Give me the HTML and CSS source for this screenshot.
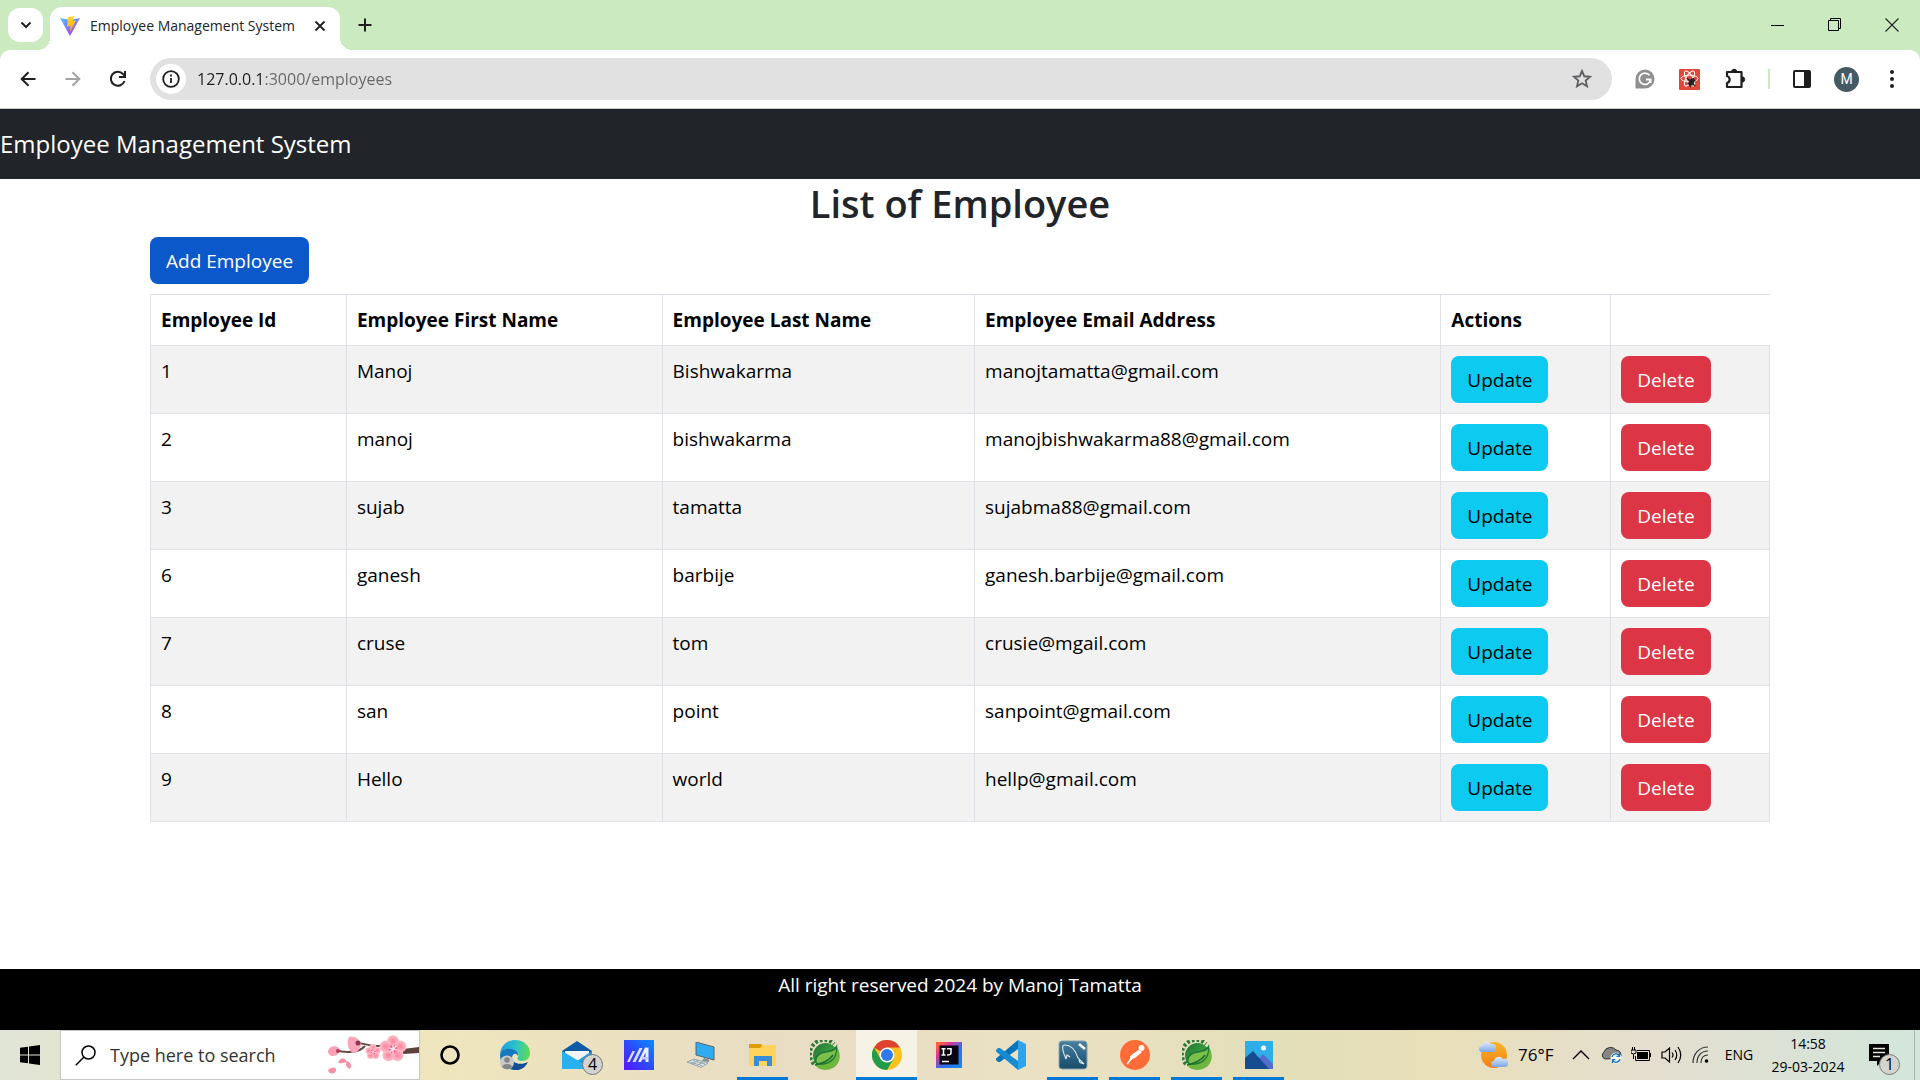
FILE: index.html
```html
<!DOCTYPE html>
<html lang="en">
<head>
<meta charset="utf-8">
<title>Employee Management System</title>
<link rel="stylesheet" href="styles.css">
</head>
<body>
<svg class="defs" aria-hidden="true">
  <defs>
    <linearGradient id="leaf" x1="0" y1="0" x2="1" y2="1"><stop offset="0" stop-color="#1f7434"/><stop offset="0.500" stop-color="#3a9a40"/><stop offset="1" stop-color="#80c344"/></linearGradient>
    <symbol id="spring" viewBox="0 0 30 30">
      <path d="M4 24A14 14 0 0 1 24 4" fill="none" stroke="#2f7a3a" stroke-width="4" stroke-dasharray="2.800 2"/>
      <circle cx="15.500" cy="15.500" r="12.500" fill="url(#leaf)"/>
      <path d="M27 7C32 15 30 24 23 28C16 31.500 8 30 5 25C12 25 24 23 27 7Z" fill="#6fb63f"/>
      <path d="M27 4C24 13 12 9 7 15C3 19 4 24 8 24.500C19 26 29 20 27 4Z" fill="#1f7a35"/>
      <path d="M26 9C21 14 13 11 8.500 16C6 19 6 22 8 23.500C19 24 26 18 26 9Z" fill="#7cc04b"/>
      <path d="M5 25C13 23 19 21 23 15" fill="none" stroke="#1c6b2e" stroke-width="1.500"/>
    </symbol>
  </defs>
</svg>

<header class="browser">
  <div class="tabstrip">
    <button class="tab-search" aria-label="Search tabs"><svg width="12" height="8" viewBox="0 0 12 8"><path d="M1.500 1.500L6 6L10.500 1.500" fill="none" stroke="#1f1f1f" stroke-width="2"/></svg></button>
    <div class="tab">
      <svg width="20" height="20" viewBox="0 0 20 20">
        <defs>
          <linearGradient id="vite" x1="0" y1="0" x2="0.600" y2="1"><stop offset="0" stop-color="#41c8ff"/><stop offset="1" stop-color="#b43bfd"/></linearGradient>
          <linearGradient id="bolt" x1="0" y1="0" x2="0" y2="1"><stop offset="0" stop-color="#ffdc3c"/><stop offset="1" stop-color="#ffa000"/></linearGradient>
        </defs>
        <path d="M0 2L10 4L20 2L10 20Z" fill="url(#vite)"/>
        <path d="M8 1L14 0L13 5L16 4.600L10 16L10.500 10L7 10.500Z" fill="url(#bolt)"/>
      </svg>
      <span class="tab-title">Employee Management System</span>
      <button class="tab-close" aria-label="Close tab"><svg width="12" height="12" viewBox="0 0 12 12"><path d="M1.500 1.500L10.500 10.500M10.500 1.500L1.500 10.500" stroke="#1f1f1f" stroke-width="1.800"/></svg></button>
    </div>
    <button class="new-tab" aria-label="New tab"><svg width="14" height="14" viewBox="0 0 14 14"><path d="M7 0.500V13.500M0.500 7H13.500" stroke="#1f1f1f" stroke-width="2"/></svg></button>
    <div class="window-controls">
      <button aria-label="Minimize"><svg width="14" height="14" viewBox="0 0 14 14"><path d="M0 7.500H13" stroke="#000"/></svg></button>
      <button aria-label="Restore"><svg width="14" height="14" viewBox="0 0 14 14"><path d="M0.500 2.500H10.500V12.500H0.500ZM2.500 2.500V0.500H12.500V10.500H10.500" fill="none" stroke="#000"/></svg></button>
      <button aria-label="Close"><svg width="14" height="14" viewBox="0 0 14 14"><path d="M0.500 0.500L13.500 13.500M13.500 0.500L0.500 13.500" stroke="#222" stroke-width="1.100"/></svg></button>
    </div>
  </div>
  <div class="toolbar">
    <button aria-label="Back"><svg width="16" height="16" viewBox="0 0 16 16"><path d="M15.500 8H2M8.500 1.200L1.700 8L8.500 14.800" fill="none" stroke="#1f1f1f" stroke-width="2"/></svg></button>
    <button aria-label="Forward"><svg width="16" height="16" viewBox="0 0 16 16"><path d="M0.500 8H14M7.500 1.200L14.300 8L7.500 14.800" fill="none" stroke="#a3a3a3" stroke-width="2"/></svg></button>
    <button aria-label="Reload"><svg width="18" height="18" viewBox="0 0 18 18"><path d="M15.500 11A7 7 0 1 1 14 4L16 6" fill="none" stroke="#1f1f1f" stroke-width="2"/><path d="M16 1V7H10" fill="none" stroke="#1f1f1f" stroke-width="2"/></svg></button>
    <div class="omnibox">
      <button class="site-info" aria-label="View site information"><svg width="18" height="18" viewBox="0 0 18 18"><circle cx="9" cy="9" r="7.800" fill="none" stroke="#1f1f1f" stroke-width="1.800"/><path d="M9 8V13M9 4.600V6.400" stroke="#1f1f1f" stroke-width="1.800"/></svg></button>
      <input class="url" type="text" aria-label="Address" value="127.0.0.1:3000/employees">
      <button class="bookmark" aria-label="Bookmark this tab"><svg width="20" height="20" viewBox="0 0 20 20"><path d="M10 2L12.300 7.300L18 7.800L13.700 11.600L15 17.300L10 14.300L5 17.300L6.300 11.600L2 7.800L7.700 7.300Z" fill="none" stroke="#5f6164" stroke-width="1.900"/></svg></button>
    </div>
    <div class="extensions">
      <button aria-label="Grammarly"><svg width="20" height="20" viewBox="0 0 20 20"><path d="M10 0.500A9.500 9.500 0 1 1 10 19.500H0.500V10A9.500 9.500 0 0 1 10 0.500Z" fill="#8f8f8f"/><path d="M14.500 6.300A5.700 5.700 0 1 0 15.600 10.500H11M15.600 10.500V14" fill="none" stroke="#fff" stroke-width="1.800"/></svg></button>
      <button aria-label="React Developer Tools"><svg width="21" height="21" viewBox="0 0 21 21"><rect width="21" height="21" rx="1" fill="#e0483a"/><g fill="none" stroke="#fff" stroke-width="1"><ellipse cx="10.500" cy="9.500" rx="8.500" ry="3.300"/><ellipse cx="10.500" cy="9.500" rx="8.500" ry="3.300" transform="rotate(60 10.500 9.500)"/><ellipse cx="10.500" cy="9.500" rx="8.500" ry="3.300" transform="rotate(120 10.500 9.500)"/></g><ellipse cx="12.500" cy="13" rx="2.500" ry="4" fill="#222" transform="rotate(35 12.500 13)"/><path d="M8 9L16 17M9 15L16.500 11M11 18L15 9" stroke="#222" stroke-width="1.200"/></svg></button>
      <button aria-label="Extensions"><svg width="22" height="22" viewBox="0 0 22 22"><path d="M3 4H17.500V19H3V15C6.500 14 6.500 9 3 8Z" fill="none" stroke="#1f1f1f" stroke-width="2.200" stroke-linejoin="round"/><path d="M7.500 4A2.700 2.700 0 0 1 12.900 4ZM18 8.800A2.700 2.700 0 0 1 18 14.200Z" fill="#1f1f1f" stroke="#1f1f1f"/></svg></button>
    </div>
    <span class="divider"></span>
    <div class="extensions">
      <button aria-label="Side panel"><svg width="18" height="18" viewBox="0 0 18 18"><rect x="1" y="1" width="16" height="16" rx="1" fill="none" stroke="#1f1f1f" stroke-width="2"/><path d="M11 1H17V17H11Z" fill="#1f1f1f"/></svg></button>
      <button aria-label="Profile"><span class="avatar">M</span></button>
      <button aria-label="Menu"><svg width="4" height="18" viewBox="0 0 4 18"><g fill="#1f1f1f"><circle cx="2" cy="2" r="2"/><circle cx="2" cy="9" r="2"/><circle cx="2" cy="16" r="2"/></g></svg></button>
    </div>
  </div>
</header>

<nav class="navbar"><a class="navbar-brand" href="#">Employee Management System</a></nav>

<main class="container">
  <h2>List of Employee</h2>
  <button class="btn btn-primary">Add Employee</button>
  <table class="table">
    <colgroup><col class="col-id"><col class="col-first"><col class="col-last"><col class="col-email"><col class="col-update"><col></colgroup>
    <thead>
      <tr><th>Employee Id</th><th>Employee First Name</th><th>Employee Last Name</th><th>Employee Email Address</th><th>Actions</th><td class="blank"></td></tr>
    </thead>
    <tbody>
      <tr><td>1</td><td>Manoj</td><td>Bishwakarma</td><td>manojtamatta@gmail.com</td><td><button class="btn btn-info">Update</button></td><td><button class="btn btn-danger">Delete</button></td></tr>
      <tr><td>2</td><td>manoj</td><td>bishwakarma</td><td>manojbishwakarma88@gmail.com</td><td><button class="btn btn-info">Update</button></td><td><button class="btn btn-danger">Delete</button></td></tr>
      <tr><td>3</td><td>sujab</td><td>tamatta</td><td>sujabma88@gmail.com</td><td><button class="btn btn-info">Update</button></td><td><button class="btn btn-danger">Delete</button></td></tr>
      <tr><td>6</td><td>ganesh</td><td>barbije</td><td>ganesh.barbije@gmail.com</td><td><button class="btn btn-info">Update</button></td><td><button class="btn btn-danger">Delete</button></td></tr>
      <tr><td>7</td><td>cruse</td><td>tom</td><td>crusie@mgail.com</td><td><button class="btn btn-info">Update</button></td><td><button class="btn btn-danger">Delete</button></td></tr>
      <tr><td>8</td><td>san</td><td>point</td><td>sanpoint@gmail.com</td><td><button class="btn btn-info">Update</button></td><td><button class="btn btn-danger">Delete</button></td></tr>
      <tr><td>9</td><td>Hello</td><td>world</td><td>hellp@gmail.com</td><td><button class="btn btn-info">Update</button></td><td><button class="btn btn-danger">Delete</button></td></tr>
    </tbody>
  </table>
</main>

<footer class="footer">All right reserved 2024 by Manoj Tamatta</footer>

<div class="taskbar">
  <button class="start" aria-label="Start"><svg width="20" height="20" viewBox="0 0 20 20"><path d="M0 2.800L8 1.700V9.500H0ZM9 1.500L20 0V9.500H9ZM0 10.500H8V18.300L0 17.200ZM9 10.500H20V20L9 18.500Z" fill="#000"/></svg></button>
  <div class="search">
    <svg width="21" height="21" viewBox="0 0 21 21"><circle cx="13.500" cy="7.500" r="6.500" fill="none" stroke="#000" stroke-width="1.500"/><path d="M9 12L0.800 20.200" stroke="#000" stroke-width="1.500"/></svg>
    <input type="text" aria-label="Search" placeholder="Type here to search">
    <svg width="92" height="40" viewBox="0 0 92 40">
      <defs>
        <radialGradient id="petal"><stop offset="0" stop-color="#f7839f"/><stop offset="1" stop-color="#ffbfca"/></radialGradient>
        <g id="blossom"><g fill="url(#petal)"><circle cx="0" cy="-7" r="5.500"/><circle cx="6.700" cy="-2.200" r="5.500"/><circle cx="4.100" cy="5.700" r="5.500"/><circle cx="-4.100" cy="5.700" r="5.500"/><circle cx="-6.700" cy="-2.200" r="5.500"/></g><circle r="4" fill="#f4698c"/><path d="M0 -4V4M-4 -1L4 1M-3 3L3 -3" stroke="#ffe3f2" stroke-width="1.200"/></g>
      </defs>
      <path d="M92 16C76 18 66 10 52 11C42 12 36 7 28 8M38 11C32 18 18 18 8 15" fill="none" stroke="#6a4a42" stroke-width="2"/>
      <path d="M92 12V18L76 19V14Z" fill="#5d413b"/>
      <path d="M1 16C2 11 8 10 12 13C13 18 10 21 6 21C3 21 1 19 1 16Z" fill="#f9a0b5"/><circle cx="11" cy="16" r="2" fill="#b53657"/>
      <path d="M22 2C27 0 32 4 34 8C34 14 30 18 26 18C21 15 19 7 22 2Z" fill="#fba6bb"/><circle cx="31" cy="8" r="2.500" fill="#8f3450"/>
      <use href="#blossom" transform="translate(46 17) scale(.62)"/>
      <use href="#blossom" transform="translate(66 14) scale(1.100)"/>
      <path d="M11 27C15 21 18 23 20 27C17 28 14 29 11 27ZM20 26C24 27 25 31 23 34C19 32 18 30 20 26ZM1 35C6 31 10 32 9 36C6 40 2 39 1 35Z" fill="#f991a6"/>
    </svg>
  </div>
  <button class="cortana" aria-label="Cortana"><svg width="20" height="20" viewBox="0 0 20 20"><circle cx="10" cy="10" r="8.500" fill="none" stroke="#000" stroke-width="2.600"/></svg></button>
  <div class="apps">
    <button aria-label="Edge"><svg width="30" height="30" viewBox="0 0 30 30">
      <defs><linearGradient id="edge" x1="0" y1="0.500" x2="1" y2="0.600"><stop offset="0" stop-color="#1e9fe0"/><stop offset="0.500" stop-color="#2cc3c9"/><stop offset="1" stop-color="#62dc4c"/></linearGradient></defs>
      <path d="M0 14C1 5 8 0 15 0C24 0 30 6 30 13C30 18 27 21 22 21C19 21 16 20 18 17C20 13 16 9 10 9C5 9 1 11 0 14Z" fill="url(#edge)"/>
      <path d="M0 15C1 10 6 8 11 9C15 9 19 12 18 16C16 12 12 14 12 18C12 23 18 26 27 23C24 28 19 30 15 30C6 30 0 24 0 15Z" fill="#1678bf"/>
      <path d="M12 17C12 23 19 26 28 22C25 28 20 31 14 30C8 28 7 21 12 17Z" fill="#104f95"/>
      <circle cx="7" cy="22.500" r="7" fill="#c9c9c9"/><circle cx="7" cy="20" r="2.800" fill="#858585"/><path d="M2 27C3 23 11 23 12 27C9 30 5 30 2 27Z" fill="#858585"/></svg></button>
    <button aria-label="Mail" class="badged"><svg width="30" height="28" viewBox="0 0 30 28"><path d="M0 10L15 0L30 10V16H0Z" fill="#0b5ba6"/><path d="M3 10H27V19H3Z" fill="#f4f4f4"/><path d="M0 10L15 20L30 10V28H0Z" fill="#1b9de2"/><path d="M0 10L30 28H0Z" fill="#29b1ef"/></svg><span class="badge">4</span></button>
    <button aria-label="Armoury"><svg width="30" height="30" viewBox="0 0 30 30"><defs><linearGradient id="arm" x1="1" y1="0" x2="0" y2="1"><stop offset="0" stop-color="#0a8cff"/><stop offset="0.500" stop-color="#2b4cff"/><stop offset="1" stop-color="#5a12fa"/></linearGradient></defs><path d="M0 0H30V30H0Z" fill="url(#arm)"/><path d="M3 22L8.500 11H11L5.500 22ZM8.500 22L15.500 8H18.500L11.500 22Z" fill="#dcdcff"/><path d="M14 22L21 7.500H24.500V22H21.500V12.500L17 22Z" fill="#eeeeff"/><path d="M18 17H24V19.500H17Z" fill="#c9c9ff"/></svg></button>
    <button aria-label="Remote PC"><svg width="28" height="26" viewBox="0 0 28 26"><path d="M9 0L27 5V18L9 13Z" fill="#30abef" stroke="#53656f"/><path d="M17 16L22 17.500V20L15 19Z" fill="#829099"/><path d="M0 20L7 17L21 21L14 25.500Z" fill="#dfe5e8" stroke="#93a3ab"/><path d="M3 20L15 23.500M6 18.500L18 22M5 22L11 18M10 23.500L16 20" stroke="#93a3ab"/></svg></button>
    <button aria-label="File Explorer" class="running"><svg width="28" height="24" viewBox="0 0 28 24"><path d="M0 1H12L14 3V7H0Z" fill="#e09b08"/><path d="M0 5H11L14 2H27V23H0Z" fill="#ffd35c"/><path d="M5 23V13H23V23H18V18H10V23Z" fill="#378dd8"/></svg></button>
    <button aria-label="Spring Tool Suite"><svg width="30" height="30"><use href="#spring"/></svg></button>
    <button aria-label="Chrome" class="active"><svg width="30" height="30" viewBox="0 0 30 30"><circle cx="15" cy="15" r="15" fill="#f9c11d"/><path d="M15 15L2 7.500A15 15 0 0 1 28 7.500H15Z" fill="#e0402f"/><path d="M2 7.500A15 15 0 0 0 15 30L21.500 18.700L15 15L8.500 18.700Z" fill="#229b4b"/><circle cx="15" cy="15" r="7.500" fill="#fff"/><circle cx="15" cy="15" r="6" fill="#3079ed"/></svg></button>
    <button aria-label="IntelliJ IDEA"><svg width="26" height="26" viewBox="0 0 26 26"><defs><linearGradient id="ij" x1="0" y1="0" x2="1" y2="1"><stop offset="0.100" stop-color="#fc6040"/><stop offset="0.300" stop-color="#d9369b"/><stop offset="0.600" stop-color="#2f70f2"/><stop offset="1" stop-color="#138be7"/></linearGradient></defs><path d="M0 0H26V26H0Z" fill="url(#ij)"/><path d="M3.500 3.500H22.500V22.500H3.500Z" fill="#090611"/><path d="M5.500 6.700H9.500M7.500 6.700V13M5.500 13H9.500M11 6.700H15V11Q15 13 11 13M6 19.500H13" fill="none" stroke="#fff" stroke-width="1.500"/></svg></button>
    <button aria-label="VS Code"><svg width="30" height="30" viewBox="0 0 30 30"><path d="M0 18.500L22 0V9L4 22L2 22L0 20Z" fill="#0874b9"/><path d="M0 11.500L0 10L2 8H4L22 21V30Z" fill="#168bd1"/><path d="M22 0L30 4V26L22 30Z" fill="#2ea4ed"/></svg></button>
    <button aria-label="MySQL Workbench" class="running"><svg width="30" height="30" viewBox="0 0 30 30"><defs><linearGradient id="sql" x1="0" y1="0" x2="0" y2="1"><stop offset="0" stop-color="#487f9f"/><stop offset="1" stop-color="#174c6b"/></linearGradient></defs><rect x="1" y="1" width="28" height="28" rx="3" fill="url(#sql)" stroke="#8aa2ac"/><path d="M8 19L6 14C4 8 4 5 7 5C14 5 18 12 20 18L26 24L22 22.500L21 20M8 19L9 15L12 17" fill="none" stroke="#dce9ee" stroke-width="1.100"/><path d="M21 4L27 9" stroke="#fff" stroke-width="2.500"/></svg></button>
    <button aria-label="Postman" class="running"><svg width="30" height="30" viewBox="0 0 30 30"><circle cx="15" cy="15" r="15" fill="#ff6c37"/><circle cx="21.500" cy="8" r="3" fill="#fff"/><path d="M18.500 10L22 12L15 18L9 20L12 15Z" fill="#fff"/><path d="M13 17L7 24M17 12L10 17" stroke="#fff" stroke-width="1.500"/></svg></button>
    <button aria-label="Spring Tool Suite, second window" class="running"><svg width="30" height="30"><use href="#spring"/></svg></button>
    <button aria-label="Photos" class="running"><svg width="28" height="28" viewBox="0 0 28 28"><rect width="28" height="28" fill="#2eaee9"/><path d="M10 22L18 13L28 23V28H10Z" fill="#546dcc"/><path d="M0 17L8 10L24 28H0Z" fill="#164c91"/><circle cx="18.500" cy="7" r="2.500" fill="#fff"/></svg></button>
  </div>
  <div class="tray">
    <button class="weather"><svg width="30" height="30" viewBox="0 0 30 30"><defs><linearGradient id="sun" x1="0" y1="0" x2="0" y2="1"><stop offset="0" stop-color="#f8b625"/><stop offset="1" stop-color="#f27c18"/></linearGradient><linearGradient id="cloud" x1="0" y1="0" x2="0" y2="1"><stop offset="0" stop-color="#dfebff"/><stop offset="1" stop-color="#80a6e6"/></linearGradient></defs><circle cx="15" cy="15" r="13" fill="url(#sun)"/><path id="puff" d="M3 12A3 3 0 0 1 3 6A5 5 0 0 1 12 4A4 4 0 0 1 17 9Q17 12 14 12Z" fill="url(#cloud)"/><use href="#puff" x="12" y="15"/></svg><span>76°F</span></button>
    <button aria-label="Show hidden icons"><svg width="18" height="10" viewBox="0 0 18 10"><path d="M1 9L9 1L17 9" fill="none" stroke="#000" stroke-width="1.400"/></svg></button>
    <button aria-label="OneDrive"><svg width="21" height="18" viewBox="0 0 21 18"><path d="M4 13A4 4 0 0 1 3 6A7 7 0 0 1 15 4A5 5 0 0 1 19 12Z" fill="#858585" stroke="#303030"/><circle cx="15" cy="12" r="5.500" fill="#fff"/><path d="M11 11A4 4 0 0 1 18.500 10M19 13A4 4 0 0 1 11.500 14M18.500 7V10.300H15.500M11.500 17V13.700H14.500" fill="none" stroke="#1473c7" stroke-width="1.300"/></svg></button>
    <button aria-label="Battery"><svg width="20" height="16" viewBox="0 0 20 16"><rect x="6" y="5" width="11" height="7" fill="#000"/><path d="M6 3.500H18.500V13.500H4.500V9M19.500 6V10M0 3H5V6Q2.500 8 0 6ZM1.500 0V3M3.500 0V3M2.500 7V12" fill="none" stroke="#000"/></svg></button>
    <button aria-label="Volume"><svg width="21" height="18" viewBox="0 0 21 18"><path d="M1 6H4L8.500 2V16L4 12H1ZM11 6.500Q13 9 11 11.500M14 4Q17.500 9 14 14M17 1Q22.500 9 17 17" fill="none" stroke="#000" stroke-width="1.200"/></svg></button>
    <button aria-label="Wi-Fi"><svg width="18" height="18" viewBox="0 0 18 18"><path d="M1 17C1 8 7 1 16 1M5 17C5 10 9 5 16 5M9 17C9 12 11 9 16 9" fill="none" stroke="#333" stroke-width="1.200"/><circle cx="14.500" cy="15" r="1.800"/></svg></button>
    <button class="lang">ENG</button>
    <button class="clock"><span>14:58</span><span>29-03-2024</span></button>
    <button class="badged notify" aria-label="Notifications"><svg width="20" height="22" viewBox="0 0 20 22"><path d="M0 0H20V17H13L8 22V17H0Z"/><path d="M4 4.500H16M4 8.500H16M4 12.500H11" stroke="#e2e8dc" stroke-width="1.500"/></svg><span class="badge">1</span></button>
    <span class="show-desktop"></span>
  </div>
</div>
</body>
</html>
```
FILE: styles.css
```css
* { box-sizing: border-box; }

body {
  margin: 0;
  min-height: 100vh;
  display: flex;
  flex-direction: column;
  font-family: "Open Sans", "Noto Sans", sans-serif;
  font-size: 19px;
  line-height: 30px;
  color: #212529;
  background: #fff;
}

button, input {
  margin: 0;
  padding: 0;
  border: 0;
  background: none;
  color: inherit;
  font: inherit;
}

svg { display: block; flex: none; }

.defs { position: absolute; width: 0; height: 0; }

/* Browser window */
.browser {
  background: #cbeac0;
  border-bottom: 1px solid #c4cbc2;
}

.tabstrip {
  height: 50px;
  display: flex;
  align-items: center;
}

.tab-search {
  width: 35px;
  height: 34px;
  margin: 0 7px 0 8px;
  display: grid;
  place-items: center;
  border-radius: 12px;
  background: #fff;
}

.tab {
  position: relative;
  align-self: flex-end;
  width: 290px;
  height: 43px;
  padding: 0 14px 6px 10px;
  display: flex;
  align-items: center;
  gap: 10px;
  border-radius: 12px 12px 0 0;
  background: #fff;
}

.tab::before,
.tab::after {
  content: "";
  position: absolute;
  bottom: 0;
  width: 12px;
  height: 12px;
}

.tab::before { right: 100%; background: radial-gradient(circle at 0 0, transparent 12px, #fff 12px); }
.tab::after { left: 100%; background: radial-gradient(circle at 100% 0, transparent 12px, #fff 12px); }

.tab-title {
  flex: 1;
  font-size: 14px;
  white-space: nowrap;
}

.new-tab {
  width: 50px;
  height: 50px;
  display: grid;
  place-items: center;
}

.window-controls { margin-left: auto; display: flex; }

.window-controls button {
  width: 57px;
  height: 50px;
  display: grid;
  place-items: center;
}

.toolbar {
  height: 58px;
  padding: 0 6px 0 5px;
  display: flex;
  align-items: center;
  border-radius: 10px 10px 0 0;
  background: #fff;
}

.toolbar button {
  width: 45px;
  height: 42px;
  display: grid;
  place-items: center;
}

.omnibox {
  flex: 1;
  height: 42px;
  margin: 0 10px;
  padding-left: 6px;
  display: flex;
  align-items: center;
  border-radius: 21px;
  background: #e1e1e1;
}

.toolbar .site-info {
  width: 30px;
  height: 30px;
  border-radius: 50%;
  background: #fff;
}

.url {
  flex: 1;
  margin-left: 11px;
  font-size: 16px;
  color: transparent;
  background: linear-gradient(to right, #1f1f1f 66px, #666 66px) text;
}

.toolbar .bookmark { width: 60px; }

.extensions { display: flex; }

.divider {
  width: 2px;
  height: 20px;
  margin: 0 9px 0 11px;
  background: #cbeac0;
}

.avatar {
  width: 25px;
  height: 25px;
  border-radius: 50%;
  background: #455a64;
  color: #fff;
  font-family: Roboto, sans-serif;
  font-size: 14px;
  line-height: 25px;
  text-align: center;
}

/* Page */
.navbar {
  height: 70px;
  display: flex;
  align-items: center;
  background: #212529;
}

.navbar-brand {
  color: #fff;
  font-size: 24px;
  text-decoration: none;
}

.container {
  flex: 1;
  margin: 0 150px;
}

h2 {
  margin: 0 0 10px;
  font-size: 38px;
  font-weight: 600;
  line-height: 48px;
  text-align: center;
}

.btn {
  display: block;
  height: 47px;
  padding: 1px 16px 0;
  border-radius: 8px;
}

.btn-primary { background: #0b58ca; color: #fff; }
.btn-info { background: #0dcaf0; color: #000; }
.btn-danger { background: #dc3545; color: #fff; }

.table {
  width: 100%;
  margin: 10px 0 20px;
  border-collapse: collapse;
  table-layout: fixed;
  color: #000;
}

.table th,
.table td {
  padding: 10px;
  border: 1px solid #dee2e6;
  text-align: left;
  vertical-align: top;
}

.table th { font-weight: 700; }
.table .blank { border-right: 0; }
.table tbody tr:nth-child(odd) { background: #f2f2f2; }

.col-id { width: 12.1%; }
.col-first { width: 19.5%; }
.col-last { width: 19.3%; }
.col-email { width: 28.8%; }
.col-update { width: 10.5%; }

.footer {
  padding: 1px 0 30px;
  background: #000;
  color: #fff;
  text-align: center;
}

/* Taskbar */
.taskbar {
  height: 50px;
  display: flex;
  color: #000;
  background: linear-gradient(to right, #e1e5d6, #efe5bd 23%, #e8dcc3 40%, #ebe1c3 55%, #e3dfb9 67%, #e9dfb9 75%, #e4decf 86%, #d2e6db);
}

.taskbar button {
  display: flex;
  align-items: center;
  justify-content: center;
}

.start, .taskbar .cortana { width: 60px; }

.search {
  width: 360px;
  padding-left: 14px;
  display: flex;
  align-items: center;
  gap: 14px;
  border: 1px solid #c6c6c6;
  background: #fff;
}

.search input { flex: 1; min-width: 0; font-size: 18px; }
.search input::placeholder { color: #333; opacity: 1; }

.apps {
  margin-left: 4px;
  display: flex;
  gap: 1px;
}

.apps button { width: 61px; position: relative; }

.apps .running::after,
.apps .active::after {
  content: "";
  position: absolute;
  bottom: 0;
  left: 5px;
  right: 5px;
  height: 3px;
  background: #0078d7;
}

.apps .active { background: #f7f2e6; }
.apps .active::after { left: 0; right: 0; }

.badged { position: relative; }

.badge {
  position: absolute;
  right: 4px;
  bottom: 5px;
  width: 21px;
  height: 21px;
  border: 1px solid #777;
  border-radius: 50%;
  background: #d3d3cf;
  font-size: 16px;
  font-weight: 500;
  line-height: 19px;
  text-align: center;
}

.tray {
  margin-left: auto;
  display: flex;
}

.tray button { width: 30px; }
.tray .weather { width: 95px; padding-left: 8px; justify-content: flex-start; gap: 9px; font-size: 17px; }
.tray .lang { width: 46px; font-size: 14px; }
.tray .clock { width: 92px; flex-direction: column; font-size: 14px; line-height: 23px; }
.tray .notify { width: 60px; padding-right: 10px; }

.tray .badge { right: 14px; }

.show-desktop {
  width: 6px;
  border-left: 1px solid #a9b5ae;
}
```
